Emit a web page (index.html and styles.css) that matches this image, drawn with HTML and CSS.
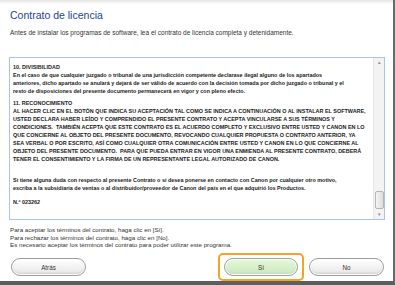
FILE: index.html
```html
<!DOCTYPE html>
<html lang="es">
<head>
    <meta charset="UTF-8">
    <title>Contrato de licencia</title>
    <link rel="stylesheet" href="styles.css">
</head>
<body>
    <div class="window">
        <div class="header">
            <h1 class="title">Contrato de licencia</h1>
            <p class="intro">Antes de instalar los programas de software, lea el contrato de licencia completa y detenidamente.</p>
        </div>

        <!-- contract text box -->
        <div class="contract">
            <div class="contract-text">
                <p>10. DIVISIBILIDAD<br>
                En el caso de que cualquier juzgado o tribunal de una jurisdicción competente declarase ilegal alguno de los apartados<br>
                anteriores, dicho apartado se anulará y dejará de ser válido de acuerdo con la decisión tomada por dicho juzgado o tribunal y el<br>
                resto de disposiciones del presente documento permanecerá en vigor y con pleno efecto.</p>
                <p>11. RECONOCIMIENTO<br>
                AL HACER CLIC EN EL BOTÓN QUE INDICA SU ACEPTACIÓN TAL COMO SE INDICA A CONTINUACIÓN O AL INSTALAR EL SOFTWARE,<br>
                USTED DECLARA HABER LEÍDO Y COMPRENDIDO EL PRESENTE CONTRATO Y ACEPTA VINCULARSE A SUS TÉRMINOS Y<br>
                CONDICIONES.&nbsp; TAMBIÉN ACEPTA QUE ESTE CONTRATO ES EL ACUERDO COMPLETO Y EXCLUSIVO ENTRE USTED Y CANON EN LO<br>
                QUE CONCIERNE AL OBJETO DEL PRESENTE DOCUMENTO, REVOCANDO CUALQUIER PROPUESTA O CONTRATO ANTERIOR, YA<br>
                SEA VERBAL O POR ESCRITO, ASÍ COMO CUALQUIER OTRA COMUNICACIÓN ENTRE USTED Y CANON EN LO QUE CONCIERNE AL<br>
                OBJETO DEL PRESENTE DOCUMENTO.&nbsp; PARA QUE PUEDA ENTRAR EN VIGOR UNA ENMIENDA AL PRESENTE CONTRATO, DEBERÁ<br>
                TENER EL CONSENTIMIENTO Y LA FIRMA DE UN REPRESENTANTE LEGAL AUTORIZADO DE CANON.</p>
                <p class="gap">Si tiene alguna duda con respecto al presente Contrato o si desea ponerse en contacto con Canon por cualquier otro motivo,<br>
                escriba a la subsidiaria de ventas o al distribuidor/proveedor de Canon del país en el que adquirió los Productos.</p>
                <p>N.º 023262</p>
            </div>
            <div class="scrollbar">
                <span class="arrow">&#9652;</span>
                <span class="track"><span class="thumb"></span></span>
                <span class="arrow">&#9662;</span>
            </div>
        </div>

        <div class="notes">
            <p>Para aceptar los términos del contrato, haga clic en [Sí].</p>
            <p>Para rechazar los términos del contrato, haga clic en [No].</p>
            <p>Es necesario aceptar los términos del contrato para poder utilizar este programa.</p>
        </div>

        <div class="buttons">
            <button class="btn">Atrás</button>
            <span class="focus"><button class="btn btn-yes">Sí</button></span>
            <button class="btn">No</button>
        </div>
    </div>
</body>
</html>
```

FILE: styles.css
```css
body {
    margin: 0;
    font-family: "Liberation Sans", Arial, sans-serif;
    background-color: #fff;
    width: 395px;
    height: 285px;
    overflow: hidden;
}
.window {
    box-sizing: border-box;
    width: 395px;
    height: 285px;
    border-right: 2px solid #6a6a6a;
    border-bottom: 4px solid #5e5e5e;
    background: linear-gradient(#e4e4e4, #fff 4px);
    display: flex;
    flex-direction: column;
}
.header {
    padding: 9px 10px 0;
}
.title {
    margin: 0;
    font-size: 10.5px;
    font-weight: normal;
    color: #17449a;
    line-height: 12px;
}
.intro {
    margin: 8px 0 0;
    font-size: 6.5px;
    line-height: 8px;
    color: #333;
}
.contract {
    flex-shrink: 0;
    margin: 20px 8px 0 9px;
    height: 163px;
    box-sizing: border-box;
    border: 1px solid #a9c5e2;
    display: flex;
}
.contract-text {
    flex: 1;
    padding: 5px 0 0 3px;
    font-size: 5.45px;
    font-weight: bold;
    line-height: 8px;
    color: #1a1a1a;
    white-space: nowrap;
    overflow: hidden;
}
.contract-text p {
    margin: 0 0 4px;
}
.contract-text .gap {
    margin-top: 13px;
    margin-bottom: 6px;
}
.scrollbar {
    width: 10px;
    background-color: #f3f3f3;
    border-left: 1px solid #e6e6e6;
    display: flex;
    flex-direction: column;
    align-items: center;
    color: #888;
    font-size: 5px;
}
.arrow {
    height: 9px;
    line-height: 9px;
}
.track {
    flex: 1;
    width: 100%;
    display: flex;
    flex-direction: column;
    justify-content: flex-end;
    align-items: center;
}
.thumb {
    width: 7px;
    height: 16px;
    border: 1px solid #b5b5b5;
    border-radius: 2px;
    background: linear-gradient(90deg, #f4f4f4, #dcdcdc);
    margin-bottom: 1px;
}
.notes {
    padding: 6px 10px 0;
    font-size: 6.2px;
    line-height: 7.5px;
    color: #333;
}
.notes p {
    margin: 0;
}
.buttons {
    display: flex;
    align-items: center;
    padding: 0 9px 0 11px;
    margin-top: auto;
    height: 28px;
}
.btn {
    width: 75px;
    height: 18px;
    padding: 0;
    border: 1px solid #9c9c9c;
    border-radius: 9px;
    background: linear-gradient(#ffffff, #e6e6e6);
    box-shadow: inset 0 0 0 1px #fff, inset 0 -2px 2px #cfcfcf;
    font-family: "Liberation Sans", Arial, sans-serif;
    font-size: 6.3px;
    color: #333;
}
.btn-yes {
    width: 74px;
    background: linear-gradient(#e6f7dc, #c9eab8);
    border-color: #94a88c;
}
.focus {
    margin-left: auto;
    margin-right: 5px;
    padding: 3px 4px;
    border: 2px solid #f5a324;
    border-radius: 5px;
    display: flex;
}
```
